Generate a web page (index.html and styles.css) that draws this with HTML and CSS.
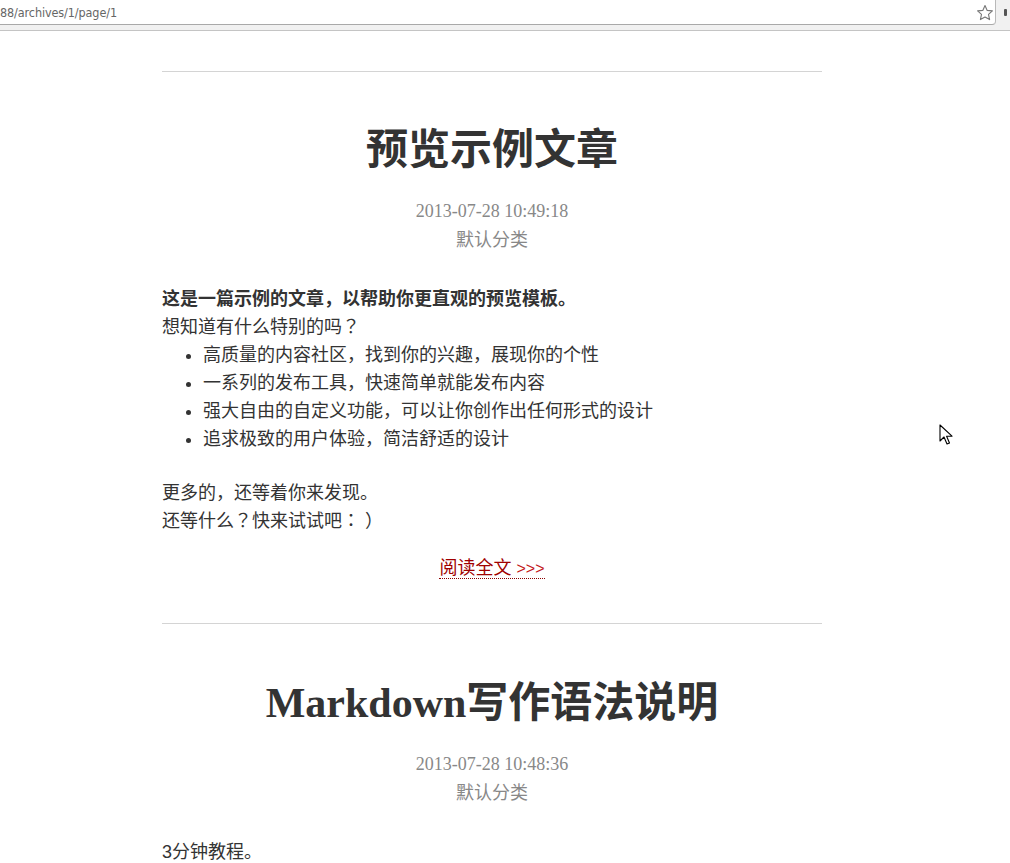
FILE: index.html
```html
<!DOCTYPE html>
<html lang="zh-CN">
<head>
<meta charset="utf-8">
<title>archives</title>
<link rel="stylesheet" href="styles.css">
</head>
<body>
<div class="chrome">
  <div class="omnibox">
    <span class="url">88/archives/1/page/1</span>
    <svg class="star" width="18" height="18" viewBox="0 0 18 18"><path d="M9 1.5 L11.2 6.4 L16.4 6.9 L12.5 10.4 L13.6 15.6 L9 13 L4.4 15.6 L5.5 10.4 L1.6 6.9 L6.8 6.4 Z" fill="none" stroke="#777" stroke-width="1.1" stroke-linejoin="round"/></svg>
  </div>
  <span class="edge"></span>
</div>
<main class="content">
  <article class="post">
    <h2 class="post-title">预览示例文章</h2>
    <div class="post-meta">
      <div class="date">2013-07-28 10:49:18</div>
      <div class="cat">默认分类</div>
    </div>
    <div class="post-body">
      <p><strong>这是一篇示例的文章，以帮助你更直观的预览模板。</strong><br>想知道有什么特别的吗<span class="punct" lang="zh-Hant">？</span></p>
      <ul>
        <li>高质量的内容社区，找到你的兴趣，展现你的个性</li>
        <li>一系列的发布工具，快速简单就能发布内容</li>
        <li>强大自由的自定义功能，可以让你创作出任何形式的设计</li>
        <li>追求极致的用户体验，简洁舒适的设计</li>
      </ul>
      <p class="gap">更多的，还等着你来发现。<br>还等什么<span class="punct" lang="zh-Hant">？</span>快来试试吧<span class="punct" lang="zh-Hant">：</span> ）</p>
      <p class="more"><a href="#">阅读全文 <span class="arrows">&gt;&gt;&gt;</span></a></p>
    </div>
  </article>
  <article class="post">
    <h2 class="post-title"><span class="latin">Markdown</span>写作语法说明</h2>
    <div class="post-meta">
      <div class="date">2013-07-28 10:48:36</div>
      <div class="cat">默认分类</div>
    </div>
    <div class="post-body">
      <p>3分钟教程。</p>
    </div>
  </article>
</main>
<svg class="cursor" width="14" height="22" viewBox="0 0 14 22"><path d="M1 1 L1 17 L5 13 L8 20 L10.5 19 L7.6 12.2 L13 12.2 Z" fill="#fff" stroke="#000" stroke-width="1.1" stroke-linejoin="round"/></svg>
</body>
</html>
```
FILE: styles.css
```css
html, body {
  margin: 0;
  padding: 0;
  background: #fff;
}
body {
  font-family: "Liberation Sans", "Noto Sans CJK SC", sans-serif;
  color: #333;
  position: relative;
  height: 863px;
  overflow: hidden;
  text-spacing-trim: space-all;
}
.chrome {
  height: 30px;
  background: #f1f1f1;
  border-bottom: 1px solid #c4c4c4;
  display: flex;
  align-items: flex-start;
}
.omnibox {
  flex: 0 0 995px;
  height: 24px;
  background: #fff;
  border-bottom: 1px solid #a9a9a9;
  border-right: 1px solid #b9b9b9;
  border-bottom-right-radius: 4px;
  display: flex;
  align-items: center;
  justify-content: space-between;
}
.url {
  font-family: "DejaVu Sans", sans-serif;
  font-stretch: condensed;
  font-size: 12.5px;
  color: #666;
  letter-spacing: -0.1px;
}
.star {
  margin-right: 1px;
  margin-top: 1px;
}
.edge {
  width: 3px;
  height: 7px;
  background: #555;
  margin: 9px 0 0 8px;
  border-radius: 1px;
}
.content {
  width: 660px;
  margin-left: 162px;
  padding-top: 40px;
}
.post {
  border-top: 1px solid #d4d4d4;
  padding-top: 53px;
  margin-bottom: 40px;
}
.post + .post {
  padding-top: 54px;
}
.post-title {
  font-family: "Liberation Serif", "Noto Sans CJK SC", serif;
  font-size: 42px;
  line-height: 50px;
  font-weight: bold;
  text-align: center;
  margin: 0;
  color: #333;
}
.post-meta {
  margin-top: 22px;
  text-align: center;
  color: #888;
  font-size: 18px;
  line-height: 28px;
}
.post-meta .date {
  font-family: "Liberation Serif", serif;
}
.post-meta .cat {
  font-family: "Liberation Serif", "Noto Sans CJK SC", serif;
  margin-top: 1px;
}
.post-body {
  margin-top: 31px;
  font-size: 18px;
  line-height: 28px;
}
.post-body p {
  margin: 0;
}
.post-body .punct {
  font-family: "Noto Sans CJK TC", "Noto Sans CJK SC", sans-serif;
  line-height: 1;
}
.post-body strong {
  font-weight: bold;
}
.post-body ul {
  margin: 0;
  padding-left: 41px;
}
.post-body li {
  line-height: 28px;
}
.post-body .gap {
  margin-top: 26px;
}
.post-body .more {
  margin-top: 19px;
  text-align: center;
}
.more a {
  color: #a00000;
  text-decoration: none;
  border-bottom: 1px dotted #8b0000;
}
.more .arrows {
  color: #c2181b;
  font-size: 16px;
}
.cursor {
  position: absolute;
  left: 939px;
  top: 424px;
}
```
